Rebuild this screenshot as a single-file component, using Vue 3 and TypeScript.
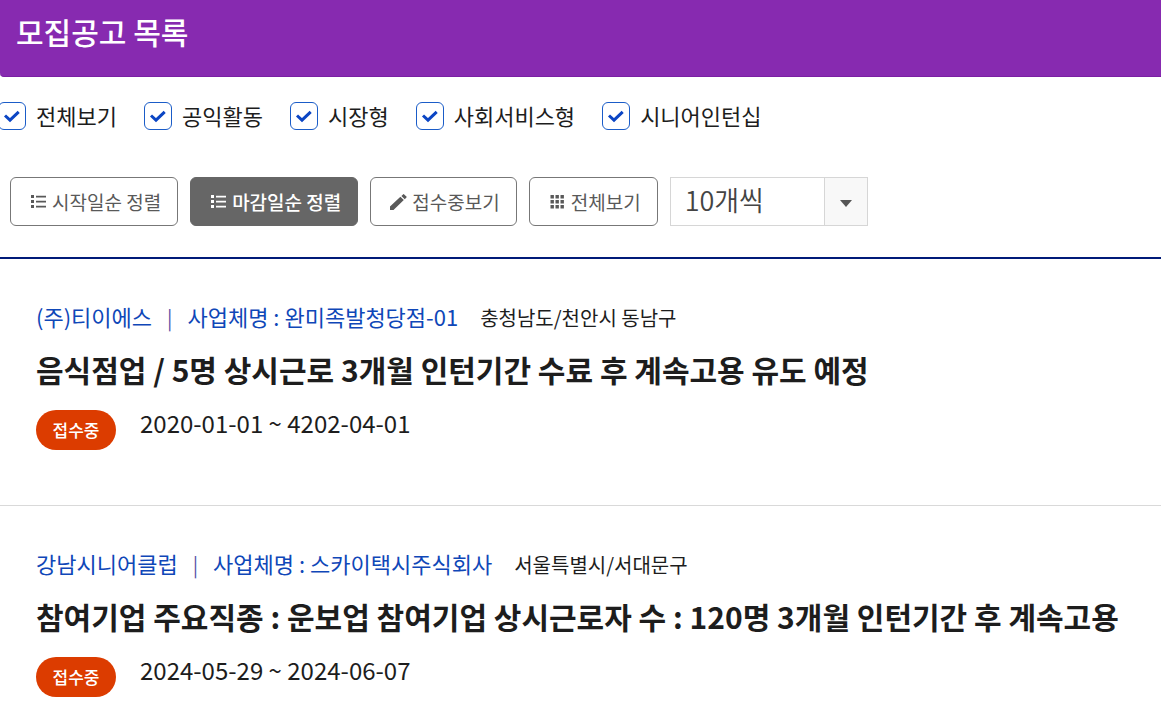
<script setup lang="ts">
import { ref } from 'vue'

interface Category {
  id: string
  label: string
  checked: boolean
}

interface Action {
  label: string
  icon: 'list' | 'pencil' | 'grid'
}

interface Posting {
  org: string
  business: string
  region: string
  title: string
  status: string
  period: string
}

const categories = ref<Category[]>([
  { id: 'cat-all', label: '전체보기', checked: true },
  { id: 'cat-public', label: '공익활동', checked: true },
  { id: 'cat-market', label: '시장형', checked: true },
  { id: 'cat-service', label: '사회서비스형', checked: true },
  { id: 'cat-intern', label: '시니어인턴십', checked: true },
])

const actions: Action[] = [
  { label: '시작일순 정렬', icon: 'list' },
  { label: '마감일순 정렬', icon: 'list' },
  { label: '접수중보기', icon: 'pencil' },
  { label: '전체보기', icon: 'grid' },
]
const active = ref(1)
const pageSize = ref('10')

const postings: Posting[] = [
  {
    org: '(주)티이에스',
    business: '사업체명 : 완미족발청당점-01',
    region: '충청남도/천안시 동남구',
    title: '음식점업 / 5명 상시근로 3개월 인턴기간 수료 후 계속고용 유도 예정',
    status: '접수중',
    period: '2020-01-01 ~ 4202-04-01',
  },
  {
    org: '강남시니어클럽',
    business: '사업체명 : 스카이택시주식회사',
    region: '서울특별시/서대문구',
    title: '참여기업 주요직종 : 운보업 참여기업 상시근로자 수 : 120명 3개월 인턴기간 후 계속고용',
    status: '접수중',
    period: '2024-05-29 ~ 2024-06-07',
  },
]
</script>

<template>
  <main class="page">
    <header class="header">
      <h1>모집공고 목록</h1>
    </header>

    <div class="filters">
      <label v-for="c in categories" :key="c.id" class="filter" :for="c.id">
        <span class="box">
          <input :id="c.id" v-model="c.checked" type="checkbox" />
          <svg v-if="c.checked" class="tick" viewBox="0 0 28 28" aria-hidden="true">
            <path d="M7 13.5l5 4.6 8.7-8.2" />
          </svg>
        </span>
        <span>{{ c.label }}</span>
      </label>
    </div>

    <div class="toolbar">
      <button
        v-for="(a, i) in actions"
        :key="a.label"
        type="button"
        class="action"
        :class="{ active: i === active }"
        @click="active = i"
      >
        <svg v-if="a.icon === 'list'" class="icon" viewBox="0 0 17 16" aria-hidden="true">
          <path d="M1 1h3v3H1zM1 6h3v3H1zM1 11h3v3H1zM6 1.7h10v1.7H6zM6 6.7h10v1.7H6zM6 11.7h10v1.7H6z" />
        </svg>
        <svg v-else-if="a.icon === 'pencil'" class="icon" viewBox="0 0 17 16" aria-hidden="true">
          <path d="M0 16v-3.4L10.4 2.8l3.4 3.3L3.5 16zM11.4 1.9L13 .4q.6-.6 1.2 0l2.2 2q.6.6 0 1.2l-1.6 1.6z" />
        </svg>
        <svg v-else class="icon" viewBox="0 0 17 16" aria-hidden="true">
          <path d="M1.5 1h3.4v3.4H1.5zM6.5 1h3.4v3.4H6.5zM11.5 1h3.4v3.4h-3.4zM1.5 6h3.4v3.4H1.5zM6.5 6h3.4v3.4H6.5zM11.5 6h3.4v3.4h-3.4zM1.5 11h3.4v3.4H1.5zM6.5 11h3.4v3.4H6.5zM11.5 11h3.4v3.4h-3.4z" />
        </svg>
        <span>{{ a.label }}</span>
      </button>
      <div class="select">
        <select v-model="pageSize" aria-label="페이지당 개수">
          <option value="10">10개씩</option>
          <option value="20">20개씩</option>
          <option value="50">50개씩</option>
        </select>
        <span class="arrow" aria-hidden="true">
          <svg viewBox="0 0 12 7"><path d="M0 0h12L6 7z" /></svg>
        </span>
      </div>
    </div>

    <ul class="list">
      <li v-for="p in postings" :key="p.title" class="item">
        <p class="meta">
          <span class="org">{{ p.org }}</span>
          <span class="sep">|</span>
          <span class="org">{{ p.business }}</span>
          <span class="region">{{ p.region }}</span>
        </p>
        <h2>{{ p.title }}</h2>
        <div class="status">
          <span class="badge">{{ p.status }}</span>
          <span class="period">{{ p.period }}</span>
        </div>
      </li>
    </ul>
  </main>
</template>

<style>
body {
  background: #fff;
}
</style>

<style scoped>
.page {
  font-family: "Noto Sans CJK KR", "Noto Sans", sans-serif;
  color: #1d1d1d;
  overflow: hidden;
}

.header {
  background: #872ab0;
  padding: 10px 16px 24px;
  border-bottom: 1px solid #7a1fa3;
  border-radius: 0 0 0 4px;
}

h1 {
  margin: 0;
  font-size: 30px;
  line-height: 42px;
  font-weight: 500;
  color: #fff;
}

.filters {
  display: flex;
  gap: 27px;
  margin: 25px 0 0 -2px;
}

.filter {
  display: flex;
  align-items: flex-start;
  gap: 10px;
  font-size: 22px;
  line-height: 26px;
  white-space: nowrap;
}

.box {
  display: grid;
  width: 28px;
  height: 28px;
}

.box > * {
  grid-area: 1 / 1;
}

.box input {
  appearance: none;
  box-sizing: border-box;
  width: 28px;
  height: 28px;
  margin: 0;
  border: 1px solid #1a5cc8;
  border-radius: 6px;
  background: #fff;
}

.tick {
  width: 28px;
  height: 28px;
  fill: none;
  stroke: #0b45c4;
  stroke-width: 3;
  pointer-events: none;
}

.toolbar {
  display: flex;
  gap: 12px;
  padding: 47px 10px 31px;
  border-bottom: 2px solid #001a78;
}

.action {
  display: flex;
  align-items: center;
  gap: 5px;
  height: 49px;
  padding: 0 16px 0 19px;
  border: 1px solid #777;
  border-radius: 6px;
  background: #fff;
  color: #595959;
  font-family: inherit;
  font-size: 19px;
  line-height: 28px;
  white-space: nowrap;
}

.action.active {
  background: #666;
  border-color: #666;
  color: #fff;
  font-weight: 500;
}

.icon {
  width: 17px;
  height: 16px;
  fill: currentColor;
}

.select {
  display: grid;
  grid-template-columns: 154px 44px;
  box-sizing: border-box;
  height: 49px;
}

.select select {
  grid-area: 1 / 1 / 2 / 3;
  appearance: none;
  margin: 0;
  padding: 0 56px 4px 14px;
  border: 1px solid #d6d6d6;
  border-radius: 0;
  background: #fff;
  color: #444;
  font-family: inherit;
  font-size: 27px;
  font-weight: 350;
}

.arrow {
  grid-area: 1 / 2;
  display: flex;
  align-items: center;
  justify-content: center;
  padding-top: 3px;
  border: 1px solid #d6d6d6;
  background: #f8f8f8;
  pointer-events: none;
  z-index: 1;
}

.arrow svg {
  width: 12px;
  height: 7px;
  fill: #555;
}

.list {
  list-style: none;
  margin: 0;
  padding: 0;
}

.item {
  padding: 39px 36px 55px;
  border-bottom: 1px solid #d9d9d9;
}

.item:last-child {
  padding-bottom: 0;
  border-bottom: 0;
}

.meta {
  display: flex;
  align-items: baseline;
  margin: 0 0 9px;
  font-size: 22px;
  line-height: 36px;
  white-space: nowrap;
}

.org {
  color: #0f47b8;
}

.sep {
  margin: 0 15px;
  color: #5a55a8;
  font-size: 20px;
}

.region {
  margin-left: 22px;
  font-size: 20px;
}

h2 {
  margin: 0 0 17px;
  font-size: 30px;
  line-height: 48px;
  font-weight: 700;
  white-space: nowrap;
}

.status {
  display: flex;
  align-items: flex-start;
  gap: 24px;
}

.badge {
  width: 80px;
  border-radius: 20px;
  background: #dc3c00;
  color: #fff;
  font-size: 17px;
  font-weight: 500;
  line-height: 40px;
  text-align: center;
}

.period {
  font-size: 24px;
  line-height: 26px;
}
</style>
